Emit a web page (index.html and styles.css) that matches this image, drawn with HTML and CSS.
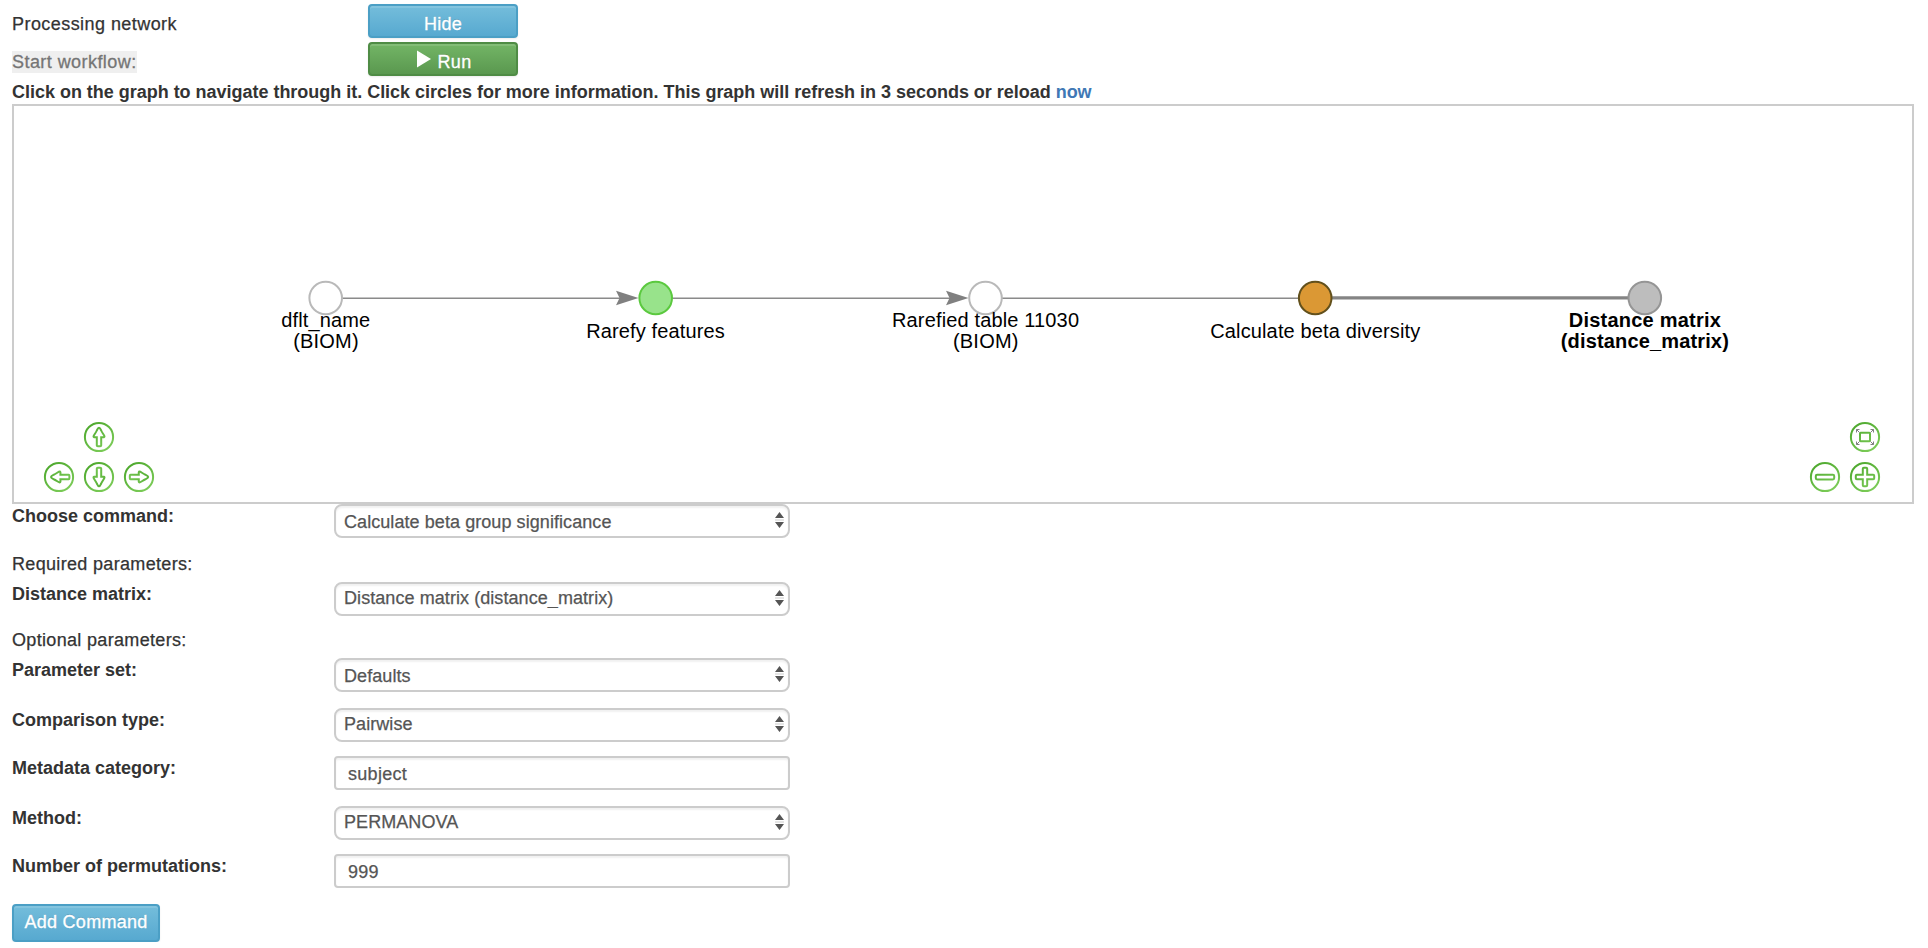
FILE: index.html
```html
<!DOCTYPE html>
<html lang="en">
<head>
<meta charset="utf-8">
<title>Processing network</title>
<link rel="stylesheet" href="styles.css">
</head>
<body>
<header class="top">
  <div class="top-row"><span class="top-label">Processing network</span><button class="btn btn-info wide">Hide</button></div>
  <div class="top-row"><span class="top-label"><span class="marked">Start workflow:</span></span><button class="btn btn-success wide"><svg class="play" width="14" height="18" viewBox="0 0 14 18"><path d="M0 0.5L14 9L0 17.5Z" fill="#fff"/></svg>Run</button></div>
</header>
<p class="hint">Click on the graph to navigate through it. Click circles for more information. This graph will refresh in 3 seconds or reload <a class="link" href="#">now</a></p>

<section class="network">
  <svg class="graph" width="1898" height="396" viewBox="14 106 1898 396">
    <g stroke="#8a8a8a" stroke-width="1.5">
      <path d="M326 298.200H620M656 298.200H950M985.500 298.200H1315"/>
      <path d="M1315 297.900H1645" stroke="#848484" stroke-width="3.4"/>
    </g>
    <g fill="#808080">
      <path id="arrow" d="M616 290.700L638.500 298L616 305.300L619.500 298Z"/>
      <use href="#arrow" x="330"/>
    </g>
    <g stroke-width="2">
      <circle cx="325.700" cy="298" r="16.300" fill="#fff" stroke="#b9b9b9"/>
      <circle cx="655.700" cy="298" r="16.300" fill="#98e38b" stroke="#5bc93f"/>
      <circle cx="985.500" cy="298" r="16.300" fill="#fff" stroke="#b9b9b9"/>
      <circle cx="1315.200" cy="298" r="16.300" fill="#db9834" stroke="#62501c"/>
      <circle cx="1644.800" cy="298" r="16.300" fill="#bdbdbd" stroke="#959595"/>
    </g>
    <g class="node-label">
      <text x="325.700" y="326.700" textLength="89">dflt_name</text>
      <text x="325.900" y="348" textLength="65.500">(BIOM)</text>
      <text x="655.500" y="337.700" textLength="138.500">Rarefy features</text>
      <text x="985.500" y="326.700" textLength="187">Rarefied table 11030</text>
      <text x="985.700" y="348" textLength="65.500">(BIOM)</text>
      <text x="1315.200" y="337.700" textLength="210">Calculate beta diversity</text>
      <text class="strong" x="1644.800" y="326.700" textLength="152">Distance matrix</text>
      <text class="strong" x="1644.800" y="348" textLength="168">(distance_matrix)</text>
    </g>
    <defs>
      <linearGradient id="green" gradientUnits="userSpaceOnUse" x1="-10" y1="-15" x2="10" y2="15">
        <stop offset="0" stop-color="#4ba62b"/><stop offset="1" stop-color="#80cf5c"/>
      </linearGradient>
      <path id="nav-arrow" d="M0 -9.200C-1 -9.200 -1.500 -8 -2.200 -6.500C-3.200 -4 -5.500 -1.500 -5.500 -0.500C-5.500 .6 -4 .2 -2.200 .2V8.500Q-2.200 9.200 -1.200 9.200H1.200Q2.200 9.200 2.200 8.500V.2C4 .2 5.500 .6 5.500 -0.500C5.500 -1.500 3.200 -4 2.200 -6.500C1.500 -8 1 -9.200 0 -9.200Z"/>
    </defs>
    <g fill="none" stroke="url(#green)" stroke-width="2">
      <g transform="translate(99 437)"><circle r="14.100"/><use href="#nav-arrow"/></g>
      <g transform="translate(99 477)"><circle r="14.100"/><use href="#nav-arrow" transform="rotate(180)"/></g>
      <g transform="translate(59 477)"><circle r="14.100"/><use href="#nav-arrow" transform="translate(1.200 0) rotate(-90)"/></g>
      <g transform="translate(139 477)"><circle r="14.100"/><use href="#nav-arrow" transform="rotate(90)"/></g>
      <g transform="translate(1865 437)"><circle r="14.100"/>
        <rect x="-5" y="-4.200" width="10" height="8.400" rx=".6"/>
        <path stroke="#808080" stroke-width="1" d="M-5.500 -4.500L-8.500 -7.500M5.500 -4.500L8.500 -7.500M-5.500 4.500L-8.500 7.500M5.500 4.500L8.500 7.500M-8.500 -4.500V-7.500H-5.500M8.500 -4.500V-7.500H5.500M-8.500 4.500V7.500H-5.500M8.500 4.500V7.500H5.500"/>
      </g>
      <g transform="translate(1825 477)"><circle r="14.100"/><rect x="-9.200" y="-2.200" width="18.400" height="4.600" rx="1.300"/></g>
      <g transform="translate(1865 477)"><circle r="14.100"/><path d="M-2.200 -8.200Q-2.200 -9.200 -1.200 -9.200H1.200Q2.200 -9.200 2.200 -8.200V-2.200H8.200Q9.200 -2.200 9.200 -1.200V1.200Q9.200 2.200 8.200 2.200H2.200V8.200Q2.200 9.200 1.200 9.200H-1.200Q-2.200 9.200 -2.200 8.200V2.200H-8.200Q-9.200 2.200 -9.200 1.200V-1.200Q-9.200 -2.200 -8.200 -2.200H-2.200Z"/></g>
    </g>
  </svg>
</section>

<form class="form">
  <div class="field tall"><label class="name">Choose command:</label><div class="pick"><select class="control low"><option>Calculate beta group significance</option></select><svg class="chev" width="9" height="16" viewBox="0 0 9 16"><path d="M0 6L4.500 0L9 6ZM0 10L4.500 16L9 10Z" fill="#555"/><path d="M0 8H9" stroke="#ccc"/></svg></div></div>
  <div class="group">Required parameters:</div>
  <div class="field"><label class="name">Distance matrix:</label><div class="pick"><select class="control high"><option>Distance matrix (distance_matrix)</option></select><svg class="chev" width="9" height="16" viewBox="0 0 9 16"><path d="M0 6L4.500 0L9 6ZM0 10L4.500 16L9 10Z" fill="#555"/><path d="M0 8H9" stroke="#ccc"/></svg></div></div>
  <div class="group">Optional parameters:</div>
  <div class="field tall"><label class="name">Parameter set:</label><div class="pick"><select class="control low"><option>Defaults</option></select><svg class="chev" width="9" height="16" viewBox="0 0 9 16"><path d="M0 6L4.500 0L9 6ZM0 10L4.500 16L9 10Z" fill="#555"/><path d="M0 8H9" stroke="#ccc"/></svg></div></div>
  <div class="field"><label class="name">Comparison type:</label><div class="pick"><select class="control high"><option>Pairwise</option></select><svg class="chev" width="9" height="16" viewBox="0 0 9 16"><path d="M0 6L4.500 0L9 6ZM0 10L4.500 16L9 10Z" fill="#555"/><path d="M0 8H9" stroke="#ccc"/></svg></div></div>
  <div class="field tall"><label class="name">Metadata category:</label><div class="pick"><input class="control low text" type="text" value="subject"></div></div>
  <div class="field"><label class="name">Method:</label><div class="pick"><select class="control high"><option>PERMANOVA</option></select><svg class="chev" width="9" height="16" viewBox="0 0 9 16"><path d="M0 6L4.500 0L9 6ZM0 10L4.500 16L9 10Z" fill="#555"/><path d="M0 8H9" stroke="#ccc"/></svg></div></div>
  <div class="field tall"><label class="name">Number of permutations:</label><div class="pick"><input class="control low text" type="text" value="999"></div></div>
  <button class="btn btn-info add" type="button">Add Command</button>
</form>
</body>
</html>
```
FILE: styles.css
```css
* { box-sizing: border-box; }
body {
  margin: 0;
  padding: 4px 14px 0 12px;
  background: #fff;
  color: #333;
  font: 18px/20px "Liberation Sans", Arial, sans-serif;
}
.top { display: grid; gap: 4px; }
.top-row { display: flex; height: 34px; }
.top-label { width: 356px; padding-top: 10px; letter-spacing: .44px; }
.marked { padding: 1px 0; background: #efefef; color: #757575; -webkit-text-stroke: .3px; }
.btn {
  display: flex;
  justify-content: center;
  align-items: center;
  border: 2px solid;
  border-radius: 4px;
  color: #fff;
  font: inherit;
  letter-spacing: .28px;
  text-shadow: 0 -1px 0 rgba(0, 0, 0, .15);
  box-shadow: inset 0 2px 0 rgba(255, 255, 255, .12), 0 1px 2px rgba(0, 0, 0, .08);
  -webkit-text-stroke: .3px;
}
.btn-info { border-color: #4b9fc5; background: linear-gradient(#74bddb, #57a9d0); }
.btn-success { border-color: #4f8c45; background: linear-gradient(#73b566, #5a984f); }
.wide { width: 150px; height: 34px; padding: 6px 0 0; }
.btn-success { padding-left: 2px; }
.play { margin: -6px 7px 0 0; }
.hint { height: 22px; margin: 6px 0 0; font-weight: bold; letter-spacing: -.02px; white-space: nowrap; }
.link { color: #4078b5; text-decoration: none; }
.network { width: 1902px; height: 400px; border: 2px solid #ccc; }
.graph { display: block; }
.node-label { font-size: 20px; letter-spacing: 0; text-anchor: middle; fill: #000; }
.strong { font-weight: bold; }
.field { display: flex; height: 48px; }
.tall { height: 50px; }
.name { width: 322px; padding-top: 2px; font-weight: bold; }
.group { height: 28px; letter-spacing: .33px; }
.top-label, .group, .control { -webkit-text-stroke: .25px; }
.pick { position: relative; width: 456px; height: 34px; }
.control {
  appearance: none;
  display: block;
  width: 456px;
  height: 34px;
  margin: 0;
  border: 2px solid #ccc;
  border-radius: 8px;
  background: #fff;
  color: #555;
  font: inherit;
  letter-spacing: .07px;
  box-shadow: inset 0 2px 2px rgba(0, 0, 0, .06);
}
.low { padding: 2px 8px 0; }
.high { padding: 0 8px 2px; }
.text { padding-left: 12px; border-radius: 4px; letter-spacing: .3px; }
.chev { position: absolute; top: 8px; right: 6px; }
.add { width: 148px; height: 38px; padding: 0 0 2px; }
```
